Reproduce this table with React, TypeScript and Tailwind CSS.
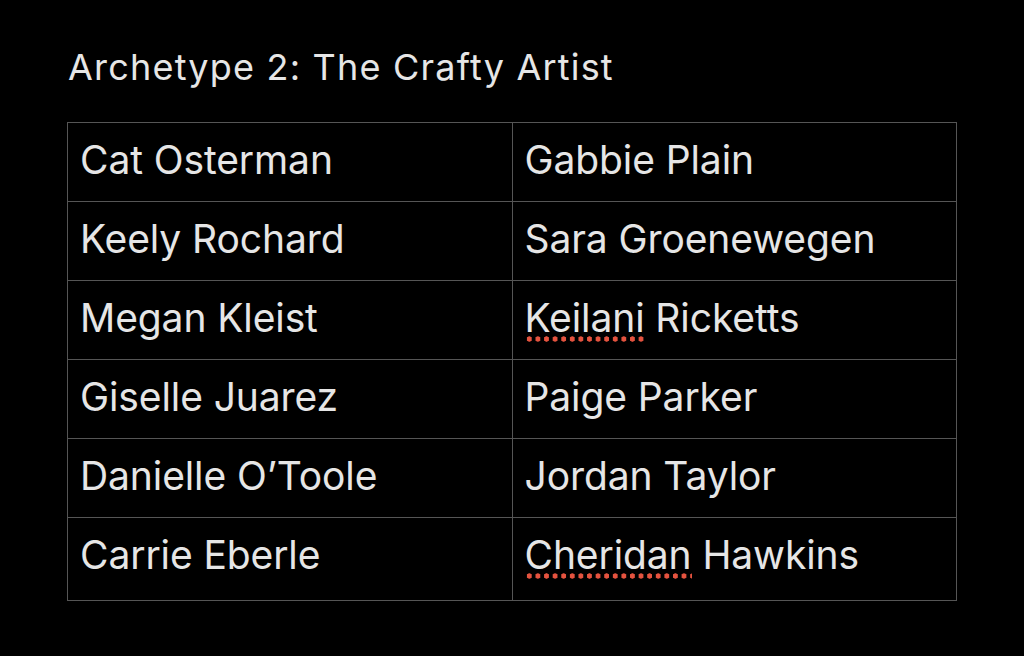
import React from 'react';

const rows: [string, string][] = [
  ['Cat Osterman', 'Gabbie Plain'],
  ['Keely Rochard', 'Sara Groenewegen'],
  ['Megan Kleist', 'Keilani Ricketts'],
  ['Giselle Juarez', 'Paige Parker'],
  ['Danielle O’Toole', 'Jordan Taylor'],
  ['Carrie Eberle', 'Cheridan Hawkins'],
];

// words the spell checker flags
const flagged = ['Keilani', 'Cheridan'];

function Misspelled({ word }: { word: string }) {
  return (
    <span className="relative">
      {word}
      <span className="absolute left-0 right-0 -bottom-[1px] h-[6px] bg-[radial-gradient(circle,#e5533f_2.4px,transparent_2.9px)] bg-[length:8.6px_6px] bg-repeat-x" />
    </span>
  );
}

function Name({ text }: { text: string }) {
  const [first, ...rest] = text.split(' ');
  if (!flagged.includes(first)) return <>{text}</>;
  return (
    <>
      <Misspelled word={first} /> {rest.join(' ')}
    </>
  );
}

export default function App() {
  return (
    <div className="w-[1024px] h-[656px] bg-black text-[#e6e6e6] font-['Inter',sans-serif] pt-[42px] pl-[67px]">
      <h1 className="text-[36px] leading-[50px] font-normal pl-[1px] mb-[30px] tracking-[1.2px]">Archetype 2: The Crafty Artist</h1>
      <table className="w-[890px] border-collapse border border-[#555]">
        <tbody>
          {rows.map(([a, b], i) => (
            <tr key={a} className={i === rows.length - 1 ? 'h-[83px]' : 'h-[79px]'}>
              {[a, b].map(n => (
                <td key={n} className="w-1/2 border border-[#555] px-[12px] pt-[17px] pb-0 text-[39px] leading-[39px] tracking-[-0.1px] align-top">
                  <Name text={n} />
                </td>
              ))}
            </tr>
          ))}
        </tbody>
      </table>
    </div>
  );
}
